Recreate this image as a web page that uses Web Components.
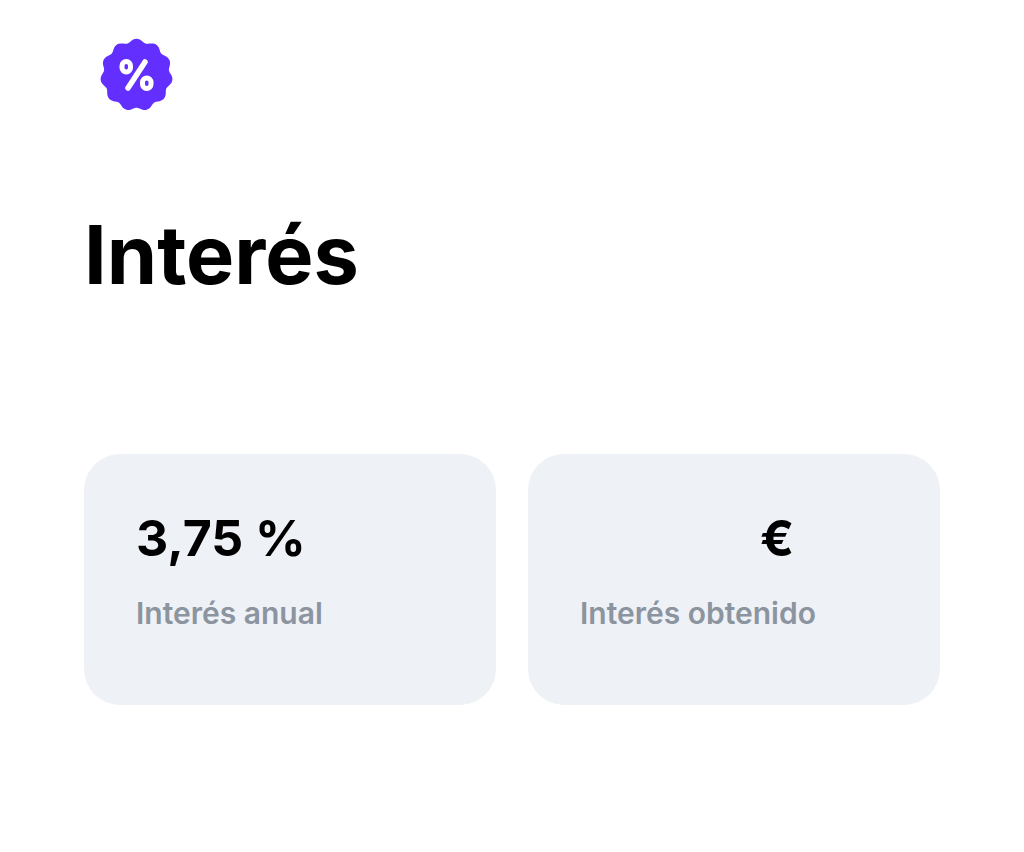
<!DOCTYPE html>
<html lang="es">
<head>
<meta charset="utf-8">
<meta name="viewport" content="width=device-width, initial-scale=1">
<title>Interés</title>
<style>
body {
	margin: 0;
	background: #fff;
	color: #000;
	font-family: Inter, "Liberation Sans", sans-serif;
}
</style>
</head>
<body>
<interest-page>
	<percent-badge slot="icon"></percent-badge>
	<span slot="title">Interés</span>
	<stat-card>
		3,75 %
		<span slot="label">Interés anual</span>
	</stat-card>
	<stat-card masked>
		€
		<span slot="label">Interés obtenido</span>
	</stat-card>
</interest-page>

<template id="interest-page">
	<style>
	:host {
		display: block;
		padding: 38px 84px;
	}
	header {
		padding: 0 16px;
	}
	h1 {
		margin: 91px 0 147px;
		font-size: 81px;
		font-weight: 700;
		line-height: 104px;
	}
	.cards {
		display: grid;
		grid-template-columns: 1fr 1fr;
		gap: 32px;
	}
	</style>
	<main>
		<header><slot name="icon"></slot></header>
		<h1><slot name="title"></slot></h1>
		<section class="cards"><slot></slot></section>
	</main>
</template>

<template id="percent-badge">
	<style>
	:host {
		display: block;
		width: 74px;
		height: 74px;
	}
	svg {
		display: block;
		width: 100%;
		height: 100%;
	}
	</style>
	<svg viewBox="-36.5 -37 74 74" role="img" aria-label="Porcentaje">
		<path class="seal" fill="#622fff"/>
		<g fill="none" stroke="#fff">
			<path d="M8.5-13L-8.5 13" stroke-width="5.5" stroke-linecap="round"/>
			<rect x="-14.5" y="-13.5" width="8.5" height="10.5" rx="4.2" stroke-width="5"/>
			<rect x="6" y="3" width="8.5" height="10.5" rx="4.2" stroke-width="5"/>
		</g>
	</svg>
</template>

<template id="stat-card">
	<style>
	:host {
		display: block;
		padding: 52px 52px 73px;
		border-radius: 36px;
		background: #eef1f6;
	}
	p {
		margin: 0;
	}
	.value {
		font-size: 50px;
		font-weight: 700;
		line-height: 64px;
	}
	/* the amount is hidden, only the currency stays */
	:host([masked]) .value {
		padding-left: 180px;
	}
	.label {
		margin-top: 24px;
		color: #8b949f;
		font-size: 30px;
		font-weight: 600;
		line-height: 38px;
	}
	</style>
	<p class="value"><slot></slot></p>
	<p class="label"><slot name="label"></slot></p>
</template>

<script>
// Base - clones <template id="{tag}"> into the shadow root
class TemplateElement extends HTMLElement {
	constructor() {
		super();
		const template = document.getElementById(this.localName);
		this.attachShadow({ mode: 'open' }).appendChild(
			document.importNode(template.content, true)
		);
	}
}

class InterestPage extends TemplateElement {}

class StatCard extends TemplateElement {}

class PercentBadge extends TemplateElement {
	connectedCallback() {
		this.shadowRoot.querySelector('.seal').setAttribute('d', this._sealPath(11, 34.6, 1.7));
	}

	// wavy circle, first lobe on top
	_sealPath(lobes, radius, depth) {
		const points = [];
		for (let deg = 0; deg < 360; deg++) {
			const a = deg * Math.PI / 180;
			// second harmonic makes the lobes rounder
			const wave = Math.cos(lobes * a) - 0.08 * Math.cos(2 * lobes * a);
			const r = radius + depth * wave;
			points.push(`${(r * Math.sin(a)).toFixed(2)} ${(-r * Math.cos(a)).toFixed(2)}`);
		}
		return `M${points.join('L')}Z`;
	}
}

customElements.define('interest-page', InterestPage);
customElements.define('stat-card', StatCard);
customElements.define('percent-badge', PercentBadge);
</script>
</body>
</html>
